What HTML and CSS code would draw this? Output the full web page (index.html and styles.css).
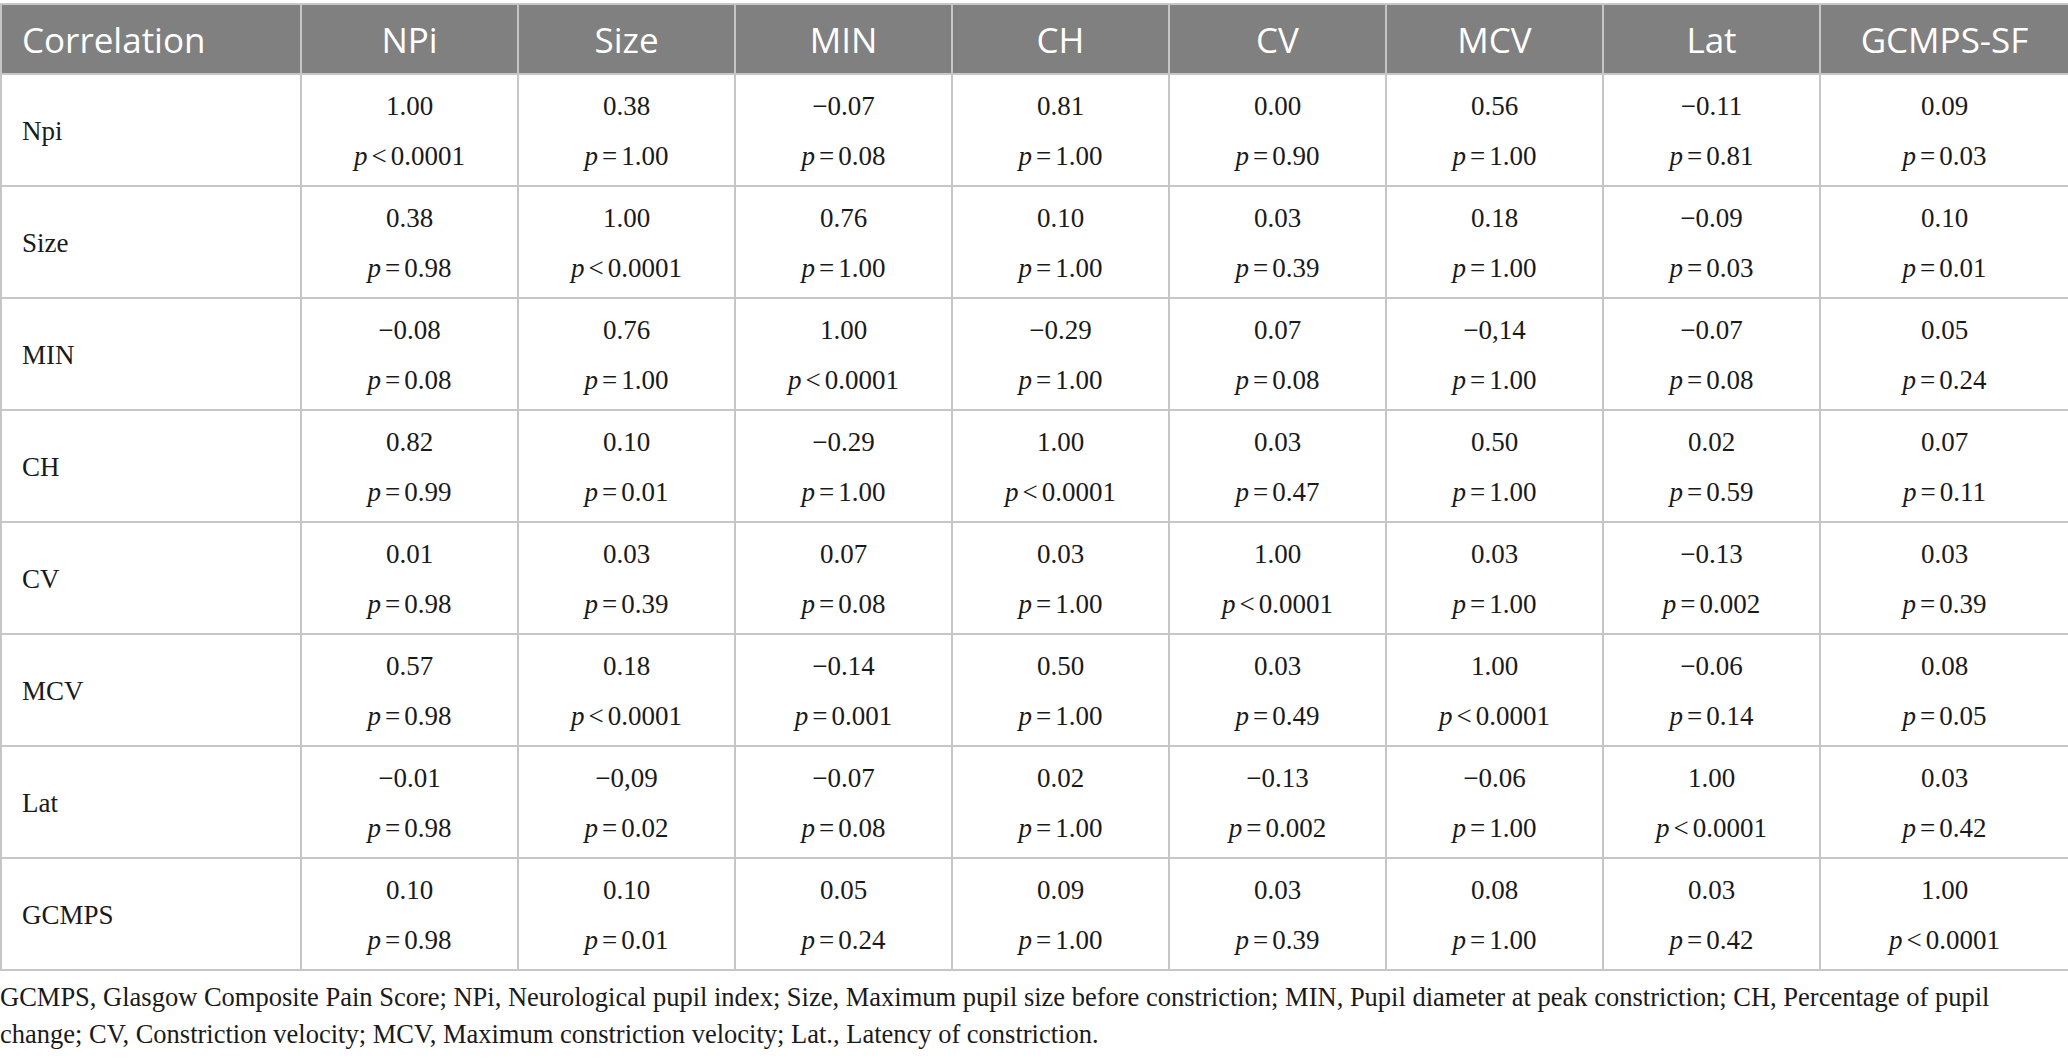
FILE: index.html
```html
<!DOCTYPE html>
<html lang="en">
<head>
  <meta charset="UTF-8" />
  <meta name="viewport" content="width=device-width, initial-scale=1.0" />
  <title>Correlation table</title>
  <link rel="stylesheet" href="styles.css">
</head>
<body>
  <table class="corr-table" id="corrTable">
    <colgroup>
      <col class="col-label">
      <col class="col-val"><col class="col-val"><col class="col-val"><col class="col-val">
      <col class="col-val"><col class="col-val"><col class="col-val">
      <col class="col-last">
    </colgroup>
    <thead>
      <tr id="headRow"></tr>
    </thead>
    <tbody id="tableBody"></tbody>
  </table>
  <p class="footnote">GCMPS, Glasgow Composite Pain Score; NPi, Neurological pupil index; Size, Maximum pupil size before constriction; MIN, Pupil diameter at peak constriction; CH, Percentage of pupil change; CV, Constriction velocity; MCV, Maximum constriction velocity; Lat., Latency of constriction.</p>

  <script>
    const headers = ["Correlation", "NPi", "Size", "MIN", "CH", "CV", "MCV", "Lat", "GCMPS-SF"]

    // [label, [value, op, p], ...]
    const rows = [
      ["Npi", ["1.00", "<", "0.0001"], ["0.38", "=", "1.00"], ["−0.07", "=", "0.08"], ["0.81", "=", "1.00"], ["0.00", "=", "0.90"], ["0.56", "=", "1.00"], ["−0.11", "=", "0.81"], ["0.09", "=", "0.03"]],
      ["Size", ["0.38", "=", "0.98"], ["1.00", "<", "0.0001"], ["0.76", "=", "1.00"], ["0.10", "=", "1.00"], ["0.03", "=", "0.39"], ["0.18", "=", "1.00"], ["−0.09", "=", "0.03"], ["0.10", "=", "0.01"]],
      ["MIN", ["−0.08", "=", "0.08"], ["0.76", "=", "1.00"], ["1.00", "<", "0.0001"], ["−0.29", "=", "1.00"], ["0.07", "=", "0.08"], ["−0,14", "=", "1.00"], ["−0.07", "=", "0.08"], ["0.05", "=", "0.24"]],
      ["CH", ["0.82", "=", "0.99"], ["0.10", "=", "0.01"], ["−0.29", "=", "1.00"], ["1.00", "<", "0.0001"], ["0.03", "=", "0.47"], ["0.50", "=", "1.00"], ["0.02", "=", "0.59"], ["0.07", "=", "0.11"]],
      ["CV", ["0.01", "=", "0.98"], ["0.03", "=", "0.39"], ["0.07", "=", "0.08"], ["0.03", "=", "1.00"], ["1.00", "<", "0.0001"], ["0.03", "=", "1.00"], ["−0.13", "=", "0.002"], ["0.03", "=", "0.39"]],
      ["MCV", ["0.57", "=", "0.98"], ["0.18", "<", "0.0001"], ["−0.14", "=", "0.001"], ["0.50", "=", "1.00"], ["0.03", "=", "0.49"], ["1.00", "<", "0.0001"], ["−0.06", "=", "0.14"], ["0.08", "=", "0.05"]],
      ["Lat", ["−0.01", "=", "0.98"], ["−0,09", "=", "0.02"], ["−0.07", "=", "0.08"], ["0.02", "=", "1.00"], ["−0.13", "=", "0.002"], ["−0.06", "=", "1.00"], ["1.00", "<", "0.0001"], ["0.03", "=", "0.42"]],
      ["GCMPS", ["0.10", "=", "0.98"], ["0.10", "=", "0.01"], ["0.05", "=", "0.24"], ["0.09", "=", "1.00"], ["0.03", "=", "0.39"], ["0.08", "=", "1.00"], ["0.03", "=", "0.42"], ["1.00", "<", "0.0001"]]
    ]

    const headRow = document.getElementById("headRow")
    headers.forEach(h => {
      const th = document.createElement("th")
      th.textContent = h
      headRow.appendChild(th)
    })

    const tableBody = document.getElementById("tableBody")
    rows.forEach(([label, ...cells]) => {
      const tr = document.createElement("tr")
      const labelTd = document.createElement("td")
      labelTd.className = "label"
      labelTd.textContent = label
      tr.appendChild(labelTd)

      cells.forEach(([value, op, p]) => {
        const td = document.createElement("td")
        td.innerHTML = `<div>${value}</div><div><i>p</i><span class="op">${op === "<" ? "&lt;" : op}</span>${p}</div>`
        tr.appendChild(td)
      })
      tableBody.appendChild(tr)
    })
  </script>
</body>
</html>
```

FILE: styles.css
```css
body {
  margin: 0;
  padding-top: 3px;
  background-color: #fff;
  color: #1a1a1a;
  font-family: "Liberation Serif", "Times New Roman", serif;
}
.corr-table {
  width: 2068px;
  border-collapse: collapse;
  table-layout: fixed;
  font-size: 27px;
}
.col-label {
  width: 300px;
}
.col-val {
  width: 217px;
}
.col-last {
  width: 249px;
}
.corr-table th {
  height: 68px;
  padding: 0 8px;
  background-color: #808080;
  color: #fff;
  font-family: "Open Sans", "Noto Sans", sans-serif;
  font-size: 35px;
  font-weight: normal;
  text-align: center;
  border: 2px solid #c6c6c6;
}
.corr-table th:first-child {
  text-align: left;
  padding-left: 20px;
}
.corr-table td {
  padding: 6px 8px 4px;
  line-height: 50px;
  text-align: center;
  vertical-align: top;
  border: 2px solid #c6c6c6;
}
.corr-table td.label {
  text-align: left;
  padding-left: 20px;
  vertical-align: middle;
}
.op {
  margin: 0 4px;
}
.footnote {
  margin: 8px 0 0;
  max-width: 2050px;
  font-size: 26.5px;
  line-height: 37px;
}
```
